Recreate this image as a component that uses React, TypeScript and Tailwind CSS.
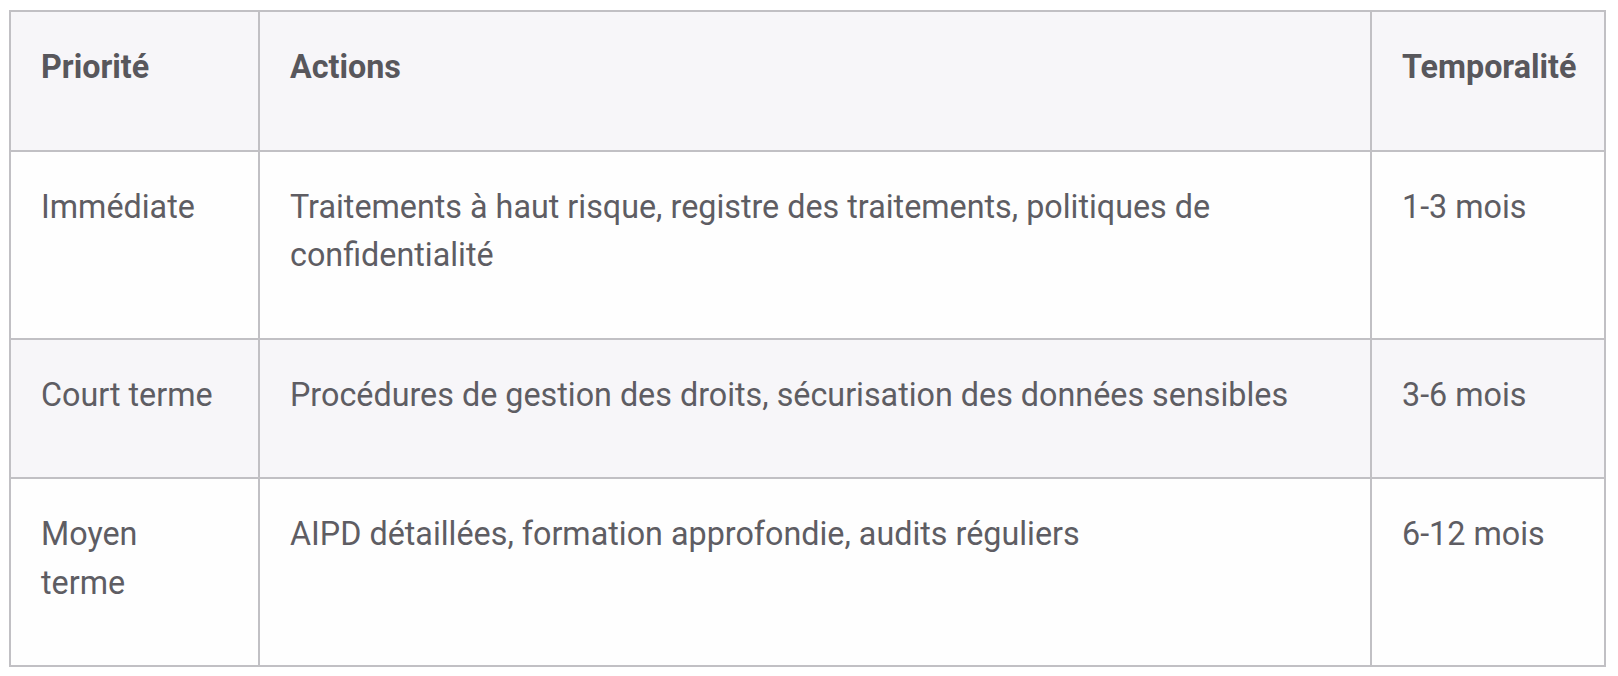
import React from "react";

const rows = [
  {
    priority: "Immédiate",
    actions:
      "Traitements à haut risque, registre des traitements, politiques de confidentialité",
    time: "1-3 mois",
    shaded: false,
  },
  {
    priority: "Court terme",
    actions: "Procédures de gestion des droits, sécurisation des données sensibles",
    time: "3-6 mois",
    shaded: true,
  },
  {
    priority: "Moyen terme",
    actions: "AIPD détaillées, formation approfondie, audits réguliers",
    time: "6-12 mois",
    shaded: false,
  },
];

export default function App() {
  return (
    <div className="min-h-screen bg-white pl-[9px] pt-[10px] font-['Roboto',sans-serif] text-[#5e5d63]">
      <table className="w-[1597px] table-fixed border-collapse text-left text-[32.3px] leading-[48.5px]">
        <thead>
          <tr className="bg-[#f7f6f9]">
            <th className="w-[249px] border-2 border-[#c1c0c4] px-[30px] pt-[31px] pb-[58px] align-top font-bold text-[#58575c]">
              Priorité
            </th>
            <th className="w-[1112px] border-2 border-[#c1c0c4] px-[30px] pt-[31px] pb-[58px] align-top font-bold text-[#58575c]">
              Actions
            </th>
            <th className="border-2 border-[#c1c0c4] px-[30px] pt-[31px] pb-[58px] align-top font-bold text-[#58575c]">
              Temporalité
            </th>
          </tr>
        </thead>
        <tbody>
          {rows.map((r) => (
            <tr key={r.priority} className={r.shaded ? "bg-[#f7f6f9]" : "bg-[#fefefe]"}>
              <td className="border-2 border-[#c1c0c4] px-[30px] pt-[31px] pb-[58px] align-top">
                {r.priority}
              </td>
              <td className="border-2 border-[#c1c0c4] px-[30px] pt-[31px] pb-[58px] align-top">
                {r.actions}
              </td>
              <td className="border-2 border-[#c1c0c4] px-[30px] pt-[31px] pb-[58px] align-top">
                {r.time}
              </td>
            </tr>
          ))}
        </tbody>
      </table>
    </div>
  );
}
